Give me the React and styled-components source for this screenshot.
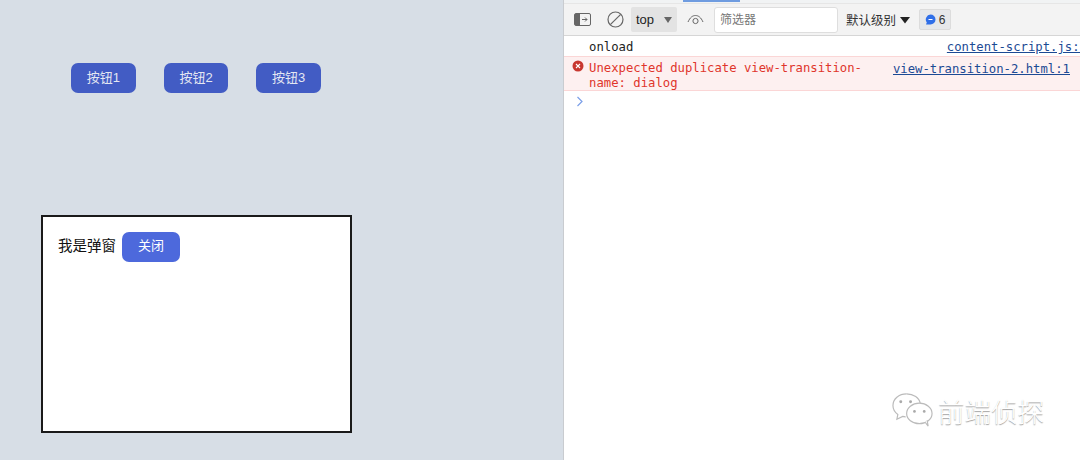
import React from 'react';
import styled, { createGlobalStyle } from 'styled-components';

const GlobalStyle = createGlobalStyle`
  html, body { margin: 0; padding: 0; }
  body { font-family: "Liberation Sans", "Noto Sans CJK SC", sans-serif; }
  #root { width: 1080px; height: 460px; overflow: hidden; }
`;

const Page = styled.div`
  position: relative;
  display: flex;
  width: 1080px;
  height: 460px;
  overflow: hidden;
`;

const Preview = styled.div`
  width: 563px;
  flex-shrink: 0;
  background: #d7dee6;
  padding: 63px 0 0 41px;
  box-sizing: border-box;
`;

const ButtonRow = styled.div`
  display: flex;
  gap: 28px;
  padding-left: 30px;
`;

const Button = styled.button`
  width: 64.7px;
  height: 30px;
  padding: 0 0 4px;
  border: 0;
  border-radius: 7px;
  background: #425cc4;
  color: #e4e7f2;
  font: 13px "Liberation Sans", "Noto Sans CJK SC", sans-serif;
`;

const CloseButton = styled(Button)`
  width: 58px;
  padding-bottom: 5px;
  background: #4d69dc;
  color: #fff;
`;

const Dialog = styled.div`
  display: flex;
  align-items: flex-start;
  gap: 6px;
  width: 311px;
  height: 218px;
  margin-top: 122px;
  padding: 15px;
  box-sizing: border-box;
  background: #fff;
  border: 2px solid #1a1a1a;
`;

const DialogText = styled.span`
  font-size: 14.5px;
  line-height: 28px;
  color: #111;
`;

const DevTools = styled.div`
  flex: 1;
  min-width: 0;
  background: #fff;
  border-left: 1px solid #c9ccd0;
  font-family: "DejaVu Sans Mono", "Noto Sans CJK SC", monospace;
`;

const TabStrip = styled.div`
  height: 3px;
  padding-left: 119px;
  background: #f1f3f4;
`;

const ActiveTab = styled.div`
  width: 57px;
  height: 2px;
  background: #6f9ce0;
`;

const Toolbar = styled.div`
  display: flex;
  align-items: center;
  height: 33px;
  box-sizing: border-box;
  padding-left: 10px;
  background: #f3f3f3;
  border-top: 1px solid #e6e6e6;
  border-bottom: 1px solid #d6d6d6;
  font-family: "Liberation Sans", "Noto Sans CJK SC", sans-serif;
  font-size: 12.5px;
  color: #333;
`;

const IconSlot = styled.span`
  display: flex;
  margin-right: ${p => p.$gap || 0}px;
`;

const ContextSelect = styled.div`
  display: flex;
  align-items: center;
  justify-content: space-between;
  width: 46px;
  height: 25px;
  box-sizing: border-box;
  padding: 0 4px 0 5px;
  margin-right: 10px;
  background: #e3e3e3;
  border-radius: 2px;
  font-size: 13px;
  color: #222;
`;

const FilterInput = styled.div`
  width: 124px;
  height: 26px;
  box-sizing: border-box;
  margin: 0 8px 0 10px;
  padding-left: 5px;
  background: #fff;
  border: 1px solid #dedede;
  border-radius: 3px;
  font-size: 12px;
  line-height: 24px;
  color: #777;
`;

const LevelSelect = styled.div`
  display: flex;
  align-items: center;
  gap: 4px;
  margin-right: 9px;
  color: #333;
`;

const IssueBadge = styled.div`
  display: flex;
  align-items: center;
  justify-content: center;
  gap: 3px;
  width: 32px;
  height: 21px;
  background: #e6e8ea;
  border: 1px solid #dcdcdc;
  border-radius: 2px;
  box-sizing: border-box;
  font-size: 12px;
`;

const LogRow = styled.div`
  display: flex;
  justify-content: space-between;
  align-items: flex-start;
  box-sizing: border-box;
  height: ${p => p.$height}px;
  padding: 4px 0 0 25px;
  font-size: 12.25px;
  line-height: 15px;
  color: #222;
`;

const ErrorRow = styled(LogRow)`
  position: relative;
  background: #fdf0f0;
  border-top: 1px solid #fbd6d6;
  border-bottom: 1px solid #fbd6d6;
  color: #e0352b;
`;

const ErrorDot = styled.span`
  position: absolute;
  left: 8px;
  top: 3px;
  display: flex;
`;

const Message = styled.div`
  width: 280px;
  flex-shrink: 0;
`;

const SourceLink = styled.span`
  flex-shrink: 0;
  color: #1c4a94;
  text-decoration: underline;
  white-space: nowrap;
  margin-top: ${p => p.$top || 0}px;
  margin-right: ${p => p.$right}px;
`;

const Prompt = styled.div`
  padding: 5px 0 0 12px;
  display: flex;
`;

const Watermark = styled.div`
  position: absolute;
  left: 891px;
  top: 392px;
  display: flex;
  align-items: center;
  gap: 4px;
  color: #fff;
  font-size: 26.5px;
  line-height: 37px;
  font-family: "Noto Sans CJK SC", sans-serif;
  font-weight: 300;
  text-shadow: 0 1px 1px #a0a0a0;
`;

const BUTTONS = ['按钮1', '按钮2', '按钮3'];

export default function App() {
  return (
    <Page>
      <GlobalStyle />
      <Preview>
        <ButtonRow>
          {BUTTONS.map(label => <Button key={label}>{label}</Button>)}
        </ButtonRow>
        <Dialog>
          <DialogText>我是弹窗</DialogText>
          <CloseButton>关闭</CloseButton>
        </Dialog>
      </Preview>

      <DevTools>
        <TabStrip><ActiveTab /></TabStrip>
        <Toolbar>
          <IconSlot $gap={16}>
            <svg width="17" height="13" viewBox="0 0 17 13">
              <rect x="0.5" y="0.5" width="16" height="12" rx="1.5" fill="none" stroke="#666" />
              <path d="M1 1h5v11H1z" fill="#666" />
              <path d="M8 6.5h5M11 4.5l2 2-2 2" fill="none" stroke="#666" />
            </svg>
          </IconSlot>
          <IconSlot $gap={7}>
            <svg width="17" height="17" viewBox="0 0 17 17">
              <circle cx="8.5" cy="8.5" r="7.5" fill="none" stroke="#666" strokeWidth="1.2" />
              <path d="M3.3 13.7L13.7 3.3" stroke="#666" strokeWidth="1.2" />
            </svg>
          </IconSlot>
          <ContextSelect>
            top
            <svg width="10" height="8" viewBox="0 0 10 8"><path d="M1 1h8L5 7z" fill="#666" /></svg>
          </ContextSelect>
          <IconSlot>
            <svg width="17" height="11" viewBox="0 0 17 11">
              <path d="M1 8C3 3.5 5.5 1.5 8.5 1.5S14 3.5 16 8" fill="none" stroke="#666" />
              <circle cx="8.5" cy="7" r="2.6" fill="none" stroke="#666" />
            </svg>
          </IconSlot>
          <FilterInput>筛选器</FilterInput>
          <LevelSelect>
            默认级别
            <svg width="10" height="8" viewBox="0 0 10 8"><path d="M0 1h10L5 7.5z" fill="#222" /></svg>
          </LevelSelect>
          <IssueBadge>
            <svg width="11" height="11" viewBox="0 0 11 11">
              <path d="M5.5 0.5a5 5 0 0 1 0 10H1l0.8-2A5 5 0 0 1 5.5 0.5z" fill="#2f6fe8" />
              <path d="M3.5 5.5h4" stroke="#fff" />
            </svg>
            6
          </IssueBadge>
        </Toolbar>
        <LogRow $height={20}>
          onload
          <SourceLink $right={-7}>content-script.js:1</SourceLink>
        </LogRow>
        <ErrorRow $height={35}>
          <ErrorDot>
            <svg width="12" height="12" viewBox="0 0 12 12">
              <circle cx="6" cy="6" r="5.5" fill="#c8372f" />
              <path d="M4 4l4 4M8 4l-4 4" stroke="#fff" strokeWidth="1.1" />
            </svg>
          </ErrorDot>
          <Message>Unexpected duplicate view-transition-name: dialog</Message>
          <SourceLink $top={1} $right={10}>view-transition-2.html:1</SourceLink>
        </ErrorRow>
        <Prompt>
          <svg width="8" height="11" viewBox="0 0 8 11">
            <path d="M1.5 1l4.5 4.5L1.5 10" fill="none" stroke="#7b9fe8" strokeWidth="1.2" />
          </svg>
        </Prompt>
      </DevTools>

      <Watermark>
        <svg width="43" height="37" viewBox="0 0 44 36">
          <path d="M16 1C8 1 2 6 2 13c0 4 2 7 5 9l-1 5 6-3c1 0 2 .5 3 .5" fill="none" stroke="#bbb" strokeWidth="1.2" />
          <path d="M16 1c7 0 13 4 14 10" fill="none" stroke="#bbb" strokeWidth="1.2" />
          <ellipse cx="29" cy="21" rx="13" ry="10.5" fill="#fff" stroke="#bbb" strokeWidth="1.2" />
          <path d="M35 30l3 4-1-6" fill="#fff" stroke="#bbb" strokeWidth="1.2" />
          <circle cx="10" cy="9" r="1.5" fill="#aaa" />
          <circle cx="20" cy="9" r="1.5" fill="#aaa" />
          <circle cx="24" cy="19" r="1.4" fill="#aaa" />
          <circle cx="34" cy="19" r="1.4" fill="#aaa" />
        </svg>
        前端侦探
      </Watermark>
    </Page>
  );
}
